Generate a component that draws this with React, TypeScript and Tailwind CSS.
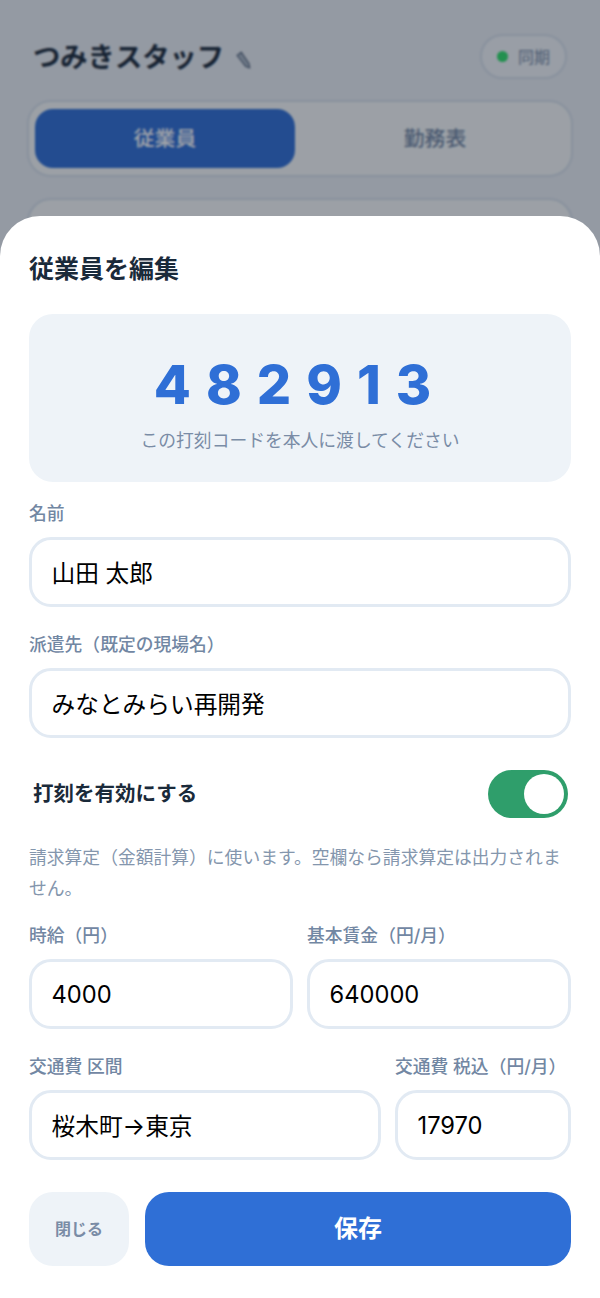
const font = '[font-family:Inter,"Noto_Sans_CJK_JP",sans-serif]';

function Field({ label, value }: { label: string; value: string }) {
  return (
    <div className="flex min-w-0 flex-col">
      <label className="mb-[13px] h-[21px] whitespace-nowrap text-[17.8px] leading-[21px] font-medium text-[#7287a3]">{label}</label>
      <input
        readOnly
        value={value}
        className="h-[70px] w-full rounded-[22px] border-[3px] border-[#e2eaf3] bg-white pr-5 pl-[19.5px] text-[23.7px] text-black outline-none"
      />
    </div>
  );
}

export default function App() {
  return (
    <div className={`relative h-[1298px] w-[600px] overflow-hidden bg-[#ebf0f5] ${font}`}>
      {/* 背景のページ */}
      <div className="flex flex-col px-[27px] pt-[34px]">
        <div className="flex h-[45px] items-center justify-between px-[6px]">
          <div className="flex items-center gap-[12px] pt-[3px]">
            <h1 className="text-[27.3px] font-bold text-[#1a2a3a]">つみきスタッフ</h1>
            <svg width="15" height="18" viewBox="0 0 15 18" className="mt-[3px]">
              <path d="M1 4.5 L5.2 1.2 L13 12.6 L13.8 17 L9.6 15.4 Z" fill="#a9b6c4" stroke="#5d6d83" strokeWidth="1.2" strokeLinejoin="round" />
            </svg>
          </div>
          <div className="flex h-[45px] w-[87px] items-center justify-center gap-[10px] rounded-full border-2 border-[#d8e1ec] bg-[#f3f7fa]">
            <span className="h-[11px] w-[11px] rounded-full bg-[#2fe06a]" />
            <span className="text-[16px] text-[#7287a3]">同期</span>
          </div>
        </div>
        <div className="mt-[21px] flex h-[77px] gap-[10px] rounded-[24px] border-2 border-[#d8e1ec] bg-[#f8fbfa] px-[6px] py-[7px]">
          <div className="flex flex-1 items-center justify-center rounded-[18px] bg-[#2f6fd6] text-[20.8px] font-medium text-white">従業員</div>
          <div className="flex flex-1 items-center justify-center text-[20.8px] font-medium text-[#7287a3]">勤務表</div>
        </div>
        <div className="mt-[21px] h-[120px] rounded-[24px] border-2 border-[#d8e1ec] bg-[#f8fbfa]" />
      </div>

      {/* オーバーレイ */}
      <div className="absolute inset-0 bg-[rgba(17,25,40,0.4)] backdrop-blur-[1px]" />

      {/* 編集シート */}
      <div className="absolute inset-x-0 top-[216px] bottom-0 flex flex-col rounded-t-[40px] bg-white px-[29px] pt-[35px]">
        <h2 className="h-[36px] text-[25px] leading-[36px] font-bold text-[#1a2a3a]">従業員を編集</h2>

        <div className="mt-[27px] flex h-[168px] flex-col items-center rounded-[24px] bg-[#eef3f8] pt-[39px]">
          <div className="text-[54px] leading-[64px] font-extrabold tracking-[15px] text-[#2f6fd6]">482913</div>
          <p className="mt-[11px] text-[17.8px] leading-[26px] text-[#7a8ca6]">この打刻コードを本人に渡してください</p>
        </div>

        <div className="mt-[21px]">
          <Field label="名前" value="山田 太郎" />
        </div>
        <div className="mt-[27px]">
          <Field label="派遣先（既定の現場名）" value="みなとみらい再開発" />
        </div>

        <div className="mt-[32px] flex h-[48px] items-center justify-between pr-[3px] pl-1">
          <span className="pt-[1px] text-[20.5px] font-bold text-[#1a2a3a]">打刻を有効にする</span>
          <div className="flex h-[48px] w-[80px] items-center justify-end rounded-full bg-[#2f9e6b] p-1">
            <span className="h-[40px] w-[40px] rounded-full bg-white" />
          </div>
        </div>

        <p className="mt-[24px] text-[17.8px] leading-[31px] text-[#8496ad]">
          請求算定（金額計算）に使います。空欄なら請求算定は出力されません。
        </p>

        <div className="mt-[21px] grid grid-cols-2 gap-[14px]">
          <Field label="時給（円）" value="4000" />
          <Field label="基本賃金（円/月）" value="640000" />
        </div>
        <div className="mt-[27px] grid grid-cols-[2fr_1fr] gap-[14px]">
          <Field label="交通費 区間" value="桜木町→東京" />
          <Field label="交通費 税込（円/月）" value="17970" />
        </div>

        <div className="mt-[32px] flex h-[74px] gap-4">
          <button className="w-[100px] rounded-[24px] bg-[#eef3f8] text-[16px] font-semibold text-[#7a8ca6]">閉じる</button>
          <button className="flex-1 rounded-[24px] bg-[#2f6fd6] text-[24px] font-bold text-white">保存</button>
        </div>
      </div>
    </div>
  );
}
